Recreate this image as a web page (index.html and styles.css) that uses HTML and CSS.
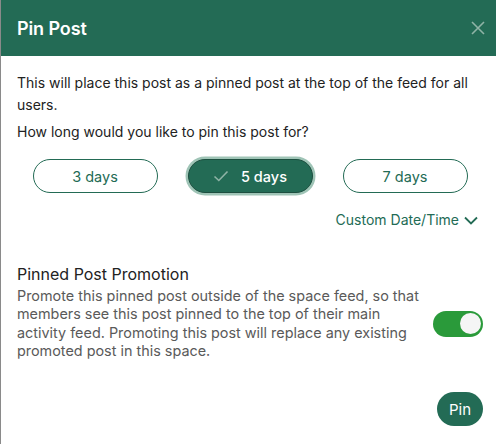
FILE: index.html
```html
<!DOCTYPE html>
<html>
<head>
<meta charset="utf-8">
<link rel="stylesheet" href="styles.css">
</head>
<body>
<div class="modal">
  <header class="modal-header">
    <h1 class="modal-title">Pin Post</h1>
    <button class="close-btn" aria-label="Close">
      <svg width="14" height="14" viewBox="0 0 14 14"><path d="M1 1 L13 13 M13 1 L1 13" stroke="currentColor" stroke-width="1.6" fill="none"/></svg>
    </button>
  </header>
  <div class="modal-body">
    <p class="intro">This will place this post as a pinned post at the top of the feed for all users.</p>
    <p class="question">How long would you like to pin this post for?</p>
    <div class="durations">
      <button class="dur">3 days</button>
      <button class="dur selected">
        <svg class="check" width="16" height="12" viewBox="0 0 16 12"><path d="M1.5 6.5 L5.8 10.5 L14.5 1.5" stroke="currentColor" stroke-width="1.6" fill="none"/></svg>
        5 days
      </button>
      <button class="dur">7 days</button>
    </div>
    <div class="custom-row">
      <button class="custom">Custom Date/Time
        <svg width="14" height="9" viewBox="0 0 14 9"><path d="M1 1.5 L7 7.5 L13 1.5" stroke="currentColor" stroke-width="1.8" fill="none"/></svg>
      </button>
    </div>
    <section class="promo">
      <h2 class="promo-title">Pinned Post Promotion</h2>
      <div class="promo-row">
        <p class="promo-desc">Promote this pinned post outside of the space feed, so that members see this post pinned to the top of their main activity feed. Promoting this post will replace any existing promoted post in this space.</p>
        <span class="toggle"><span class="knob"></span></span>
      </div>
    </section>
    <div class="footer">
      <button class="pin-btn">Pin</button>
    </div>
  </div>
</div>
</body>
</html>
```

FILE: styles.css
```css
html, body {
  margin: 0;
  padding: 0;
  background: #ffffff;
}
body {
  font-family: Inter, "Liberation Sans", sans-serif;
  color: #222222;
}
.modal {
  border-left: 1px solid #8a8a8a;
  height: 444px;
  box-sizing: border-box;
}
.modal-header {
  height: 56px;
  background: #236b55;
  display: flex;
  align-items: center;
  justify-content: space-between;
  padding: 0 11px 0 16px;
}
.modal-title {
  margin: 0;
  color: #ffffff;
  font-size: 18px;
  font-weight: 600;
  letter-spacing: -0.1px;
}
.close-btn {
  background: none;
  border: 0;
  padding: 0;
  color: #8fb3a6;
  width: 14px;
  height: 14px;
  display: flex;
}
.modal-body {
  padding: 16px 13px 0 16px;
}
.intro, .question {
  margin: 0;
  font-size: 14px;
  line-height: 22px;
  color: #222;
}
.question {
  margin-top: 5px;
}
.durations {
  display: flex;
  justify-content: center;
  gap: 30px;
  margin-top: 16px;
}
.dur {
  width: 125px;
  height: 34px;
  border: 1px solid #236b55;
  border-radius: 17px;
  background: #fff;
  color: #236b55;
  font-family: inherit;
  font-size: 14.5px;
  display: flex;
  align-items: center;
  justify-content: center;
  gap: 12px;
  padding: 0;
}
.dur.selected {
  background: #236b55;
  color: #ffffff;
  border-color: #1d4f40;
  box-shadow: 0 0 0 2.5px #9fc4b6;
  font-weight: 500;
}
.check {
  color: #8fb3a6;
}
.custom-row {
  display: flex;
  justify-content: flex-end;
  margin-top: 16px;
  padding-right: 5px;
}
.custom {
  background: none;
  border: 0;
  padding: 0;
  color: #236b55;
  font-family: inherit;
  font-size: 14px;
  line-height: 22px;
  display: flex;
  align-items: center;
  gap: 5px;
}
.promo {
  margin-top: 31px;
}
.promo-title {
  margin: 0;
  font-size: 16px;
  font-weight: 400;
  line-height: 24px;
  color: #222;
}
.promo-row {
  display: flex;
  align-items: center;
  justify-content: space-between;
  margin-top: 1px;
}
.promo-desc {
  margin: 0;
  width: 404px;
  font-size: 14.4px;
  line-height: 18.3px;
  color: #5a5a5a;
}
.toggle {
  width: 50px;
  height: 26px;
  border-radius: 13px;
  background: #2a9a3a;
  display: flex;
  align-items: center;
  justify-content: flex-end;
  padding: 0 2px;
  box-sizing: border-box;
}
.knob {
  width: 21px;
  height: 21px;
  border-radius: 50%;
  background: #f5f5f5;
}
.footer {
  display: flex;
  justify-content: flex-end;
  margin-top: 32px;
}
.pin-btn {
  width: 46px;
  height: 34px;
  border: 0;
  border-radius: 17px;
  background: #236b55;
  color: #fff;
  font-family: inherit;
  font-size: 15px;
  padding: 0;
}
```
